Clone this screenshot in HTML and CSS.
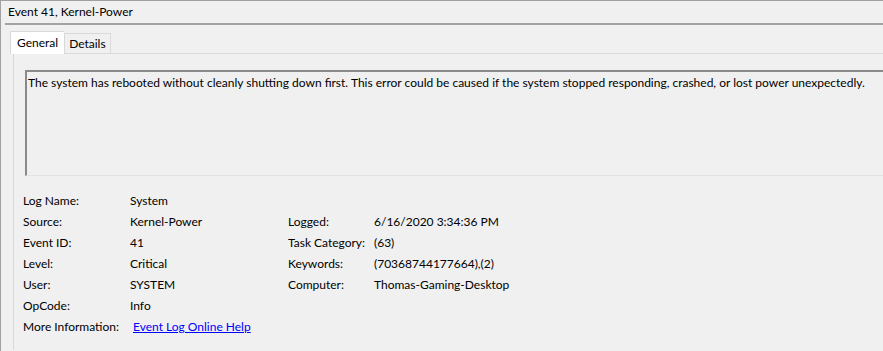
FILE: index.html
```html
<!DOCTYPE html>
<html>
<head>
<meta charset="utf-8">
<link rel="stylesheet" href="styles.css">
</head>
<body>
<div class="window">
  <div class="title">Event 41, Kernel-Power</div>
  <div class="sep"></div>
  <div class="tabs">
    <div class="tab active">General</div>
    <div class="tab">Details</div>
  </div>
  <div class="panel">
    <div class="desc">The system has rebooted without cleanly shutting down first. This error could be caused if the system stopped responding, crashed, or lost power unexpectedly.</div>
    <div class="fields">
      <div class="lbl">Log Name:</div><div class="val">System</div><div></div><div></div>
      <div class="lbl">Source:</div><div class="val">Kernel-Power</div><div class="lbl">Logged:</div><div class="val">6/16/2020 3:34:36 PM</div>
      <div class="lbl">Event ID:</div><div class="val">41</div><div class="lbl">Task Category:</div><div class="val">(63)</div>
      <div class="lbl">Level:</div><div class="val">Critical</div><div class="lbl">Keywords:</div><div class="val">(70368744177664),(2)</div>
      <div class="lbl">User:</div><div class="val">SYSTEM</div><div class="lbl">Computer:</div><div class="val">Thomas-Gaming-Desktop</div>
      <div class="lbl">OpCode:</div><div class="val">Info</div><div></div><div></div>
      <div class="lbl">More Information:</div><div class="val"><a class="link" href="#">Event Log Online Help</a></div><div></div><div></div>
    </div>
  </div>
</div>
</body>
</html>
```
FILE: styles.css
```css
html, body {
  margin: 0;
  padding: 0;
  background: #f0f0f0;
}
body {
  font-family: Lato, "Noto Sans", sans-serif;
  font-size: 12px;
  color: #000;
  overflow: hidden;
}
.window {
  height: 351px;
  border-top: 1px solid #a0a0a0;
  border-left: 1px solid #a0a0a0;
  box-sizing: border-box;
  overflow: hidden;
}
.title {
  height: 22px;
  line-height: 21px;
  padding-left: 7px;
}
.sep {
  margin-left: 4px;
  border-top: 2px solid #a3a3a3;
}
.tabs {
  display: flex;
  margin-top: 6px;
  margin-left: 9px;
  height: 22px;
  align-items: flex-end;
}
.tab {
  box-sizing: border-box;
  border: 1px solid #d9d9d9;
  border-bottom: none;
  height: 20px;
  line-height: 19px;
  padding: 0 4px;
  background: #f0f0f0;
}
.tab.active {
  background: #fff;
  line-height: 22px;
  padding: 0 6px;
  border-right: none;
  position: relative;
  z-index: 1;
  margin-bottom: -1px;
  height: 23px;
}
.panel {
  margin-left: 12px;
  border-top: 1px solid #d9d9d9;
  border-left: 1px solid #d9d9d9;
  padding: 16px 0 0 9px;
  height: 280px;
}
.desc {
  margin-left: 2px;
  height: 106px;
  box-sizing: border-box;
  border-top: 2px solid #8a8a8a;
  border-left: 2px solid #8a8a8a;
  border-bottom: 1px solid #e3e3e3;
  padding: 3px 0 0 1px;
  line-height: 16px;
  white-space: nowrap;
  overflow: hidden;
}
.fields {
  margin-top: 14px;
  display: grid;
  grid-template-columns: 107px 158px 86px auto;
  grid-auto-rows: 21px;
  line-height: 21px;
}
.link {
  color: #0000ff;
  text-decoration: underline;
  margin-left: 3px;
}
```
